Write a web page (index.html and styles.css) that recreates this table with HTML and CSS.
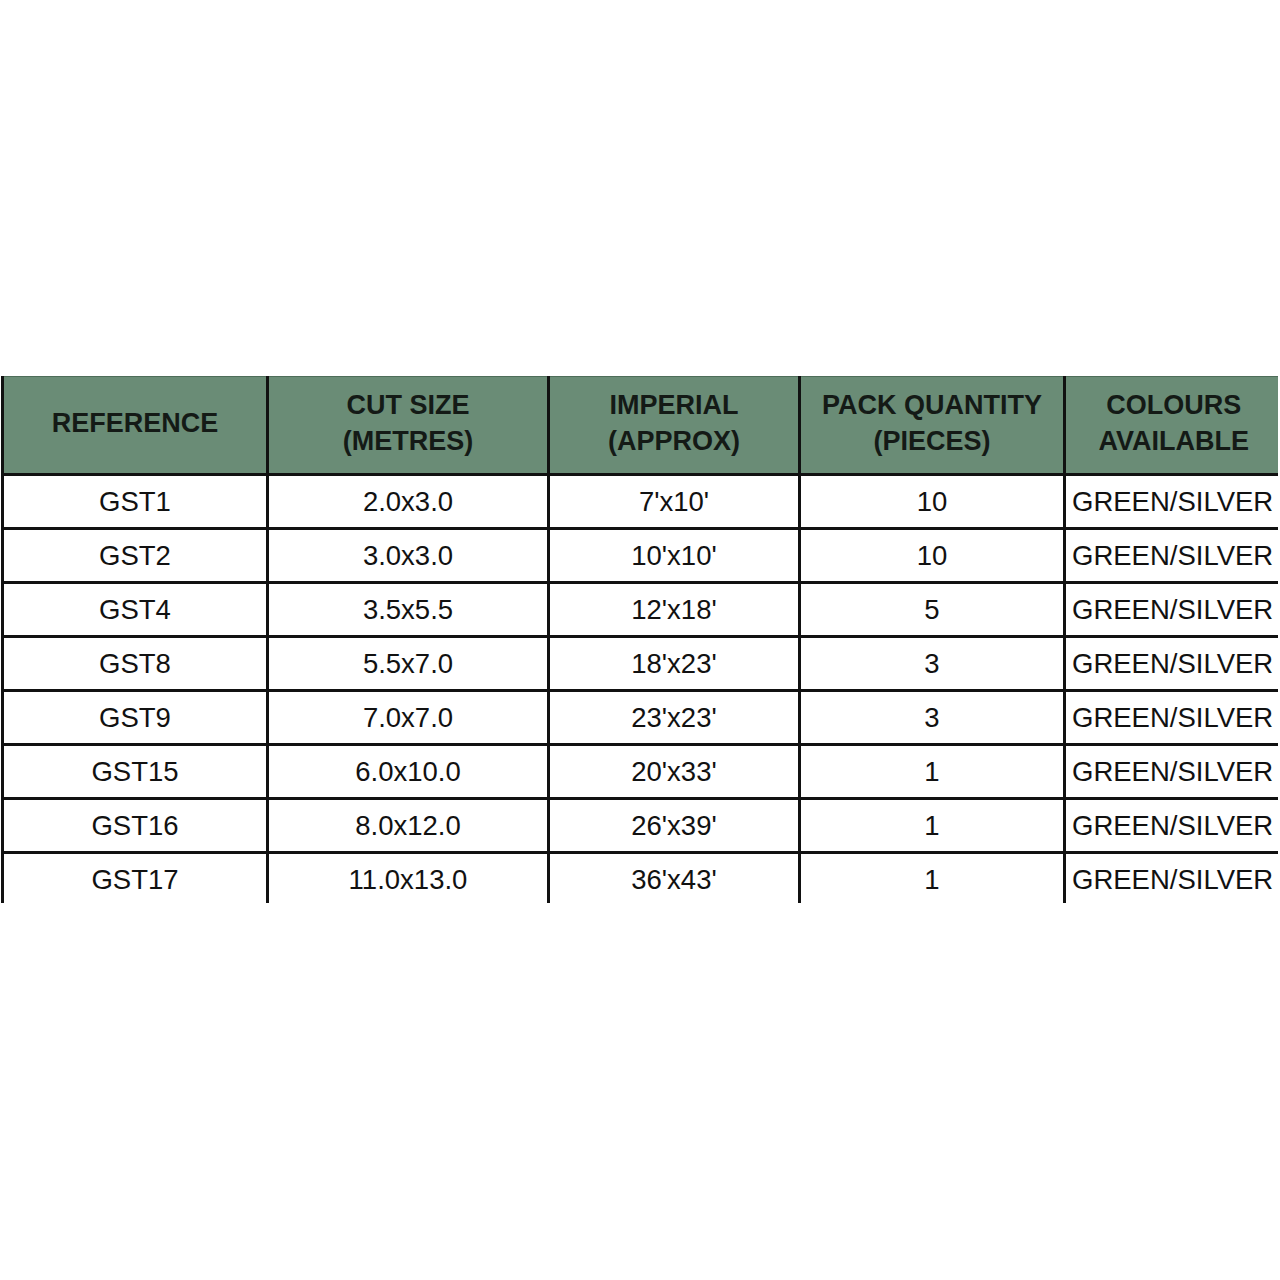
FILE: index.html
```html
<!DOCTYPE html>
<html>
<head>
<meta charset="utf-8">
<link rel="stylesheet" href="styles.css">
</head>
<body>
<div class="page">
  <div class="clip">
    <table class="spec">
      <colgroup>
        <col class="c1"><col class="c2"><col class="c3"><col class="c4"><col class="c5">
      </colgroup>
      <thead>
        <tr>
          <th>REFERENCE</th>
          <th>CUT SIZE<br>(METRES)</th>
          <th>IMPERIAL<br>(APPROX)</th>
          <th>PACK QUANTITY<br>(PIECES)</th>
          <th>COLOURS<br>AVAILABLE</th>
        </tr>
      </thead>
      <tbody>
        <tr><td>GST1</td><td>2.0x3.0</td><td>7'x10'</td><td>10</td><td class="col">GREEN/SILVER</td></tr>
        <tr><td>GST2</td><td>3.0x3.0</td><td>10'x10'</td><td>10</td><td class="col">GREEN/SILVER</td></tr>
        <tr><td>GST4</td><td>3.5x5.5</td><td>12'x18'</td><td>5</td><td class="col">GREEN/SILVER</td></tr>
        <tr><td>GST8</td><td>5.5x7.0</td><td>18'x23'</td><td>3</td><td class="col">GREEN/SILVER</td></tr>
        <tr><td>GST9</td><td>7.0x7.0</td><td>23'x23'</td><td>3</td><td class="col">GREEN/SILVER</td></tr>
        <tr><td>GST15</td><td>6.0x10.0</td><td>20'x33'</td><td>1</td><td class="col">GREEN/SILVER</td></tr>
        <tr><td>GST16</td><td>8.0x12.0</td><td>26'x39'</td><td>1</td><td class="col">GREEN/SILVER</td></tr>
        <tr><td>GST17</td><td>11.0x13.0</td><td>36'x43'</td><td>1</td><td class="col">GREEN/SILVER</td></tr>
      </tbody>
    </table>
  </div>
</div>
</body>
</html>
```
FILE: styles.css
```css
html, body {
  margin: 0;
  padding: 0;
  background: #ffffff;
}
.page {
  width: 1280px;
  height: 1280px;
  padding-top: 376px;
  box-sizing: border-box;
  overflow: hidden;
}
.clip {
  margin-left: 1px;
  width: 1277px;
  height: 527px;
  overflow: hidden;
}
.spec {
  border-collapse: collapse;
  table-layout: fixed;
  width: 1279px;
  font-family: "Liberation Sans", Arial, sans-serif;
  font-size: 27.5px;
  color: #111111;
}
.c1 { width: 265px; }
.c2 { width: 281px; }
.c3 { width: 251px; }
.c4 { width: 265px; }
.c5 { width: 217px; }
.spec th {
  background: #6a8c76;
  color: #141a16;
  font-weight: bold;
  font-size: 27px;
  line-height: 36px;
  height: 92px;
  padding: 0 0 4px 0;
  text-align: center;
  vertical-align: middle;
  border-left: 3px solid #111;
  border-right: 3px solid #111;
  border-bottom: 3px solid #111;
  border-top: 1px solid #4e6d59;
  white-space: nowrap;
}
.spec th:last-child { border-right: none; }
.spec td {
  height: 51px;
  padding: 0;
  text-align: center;
  vertical-align: middle;
  line-height: 30px;
  border: 3px solid #111;
  white-space: nowrap;
}
.spec td:last-child { border-right: none; }
.spec td.col {
  text-align: left;
  padding-left: 6px;
}
```
